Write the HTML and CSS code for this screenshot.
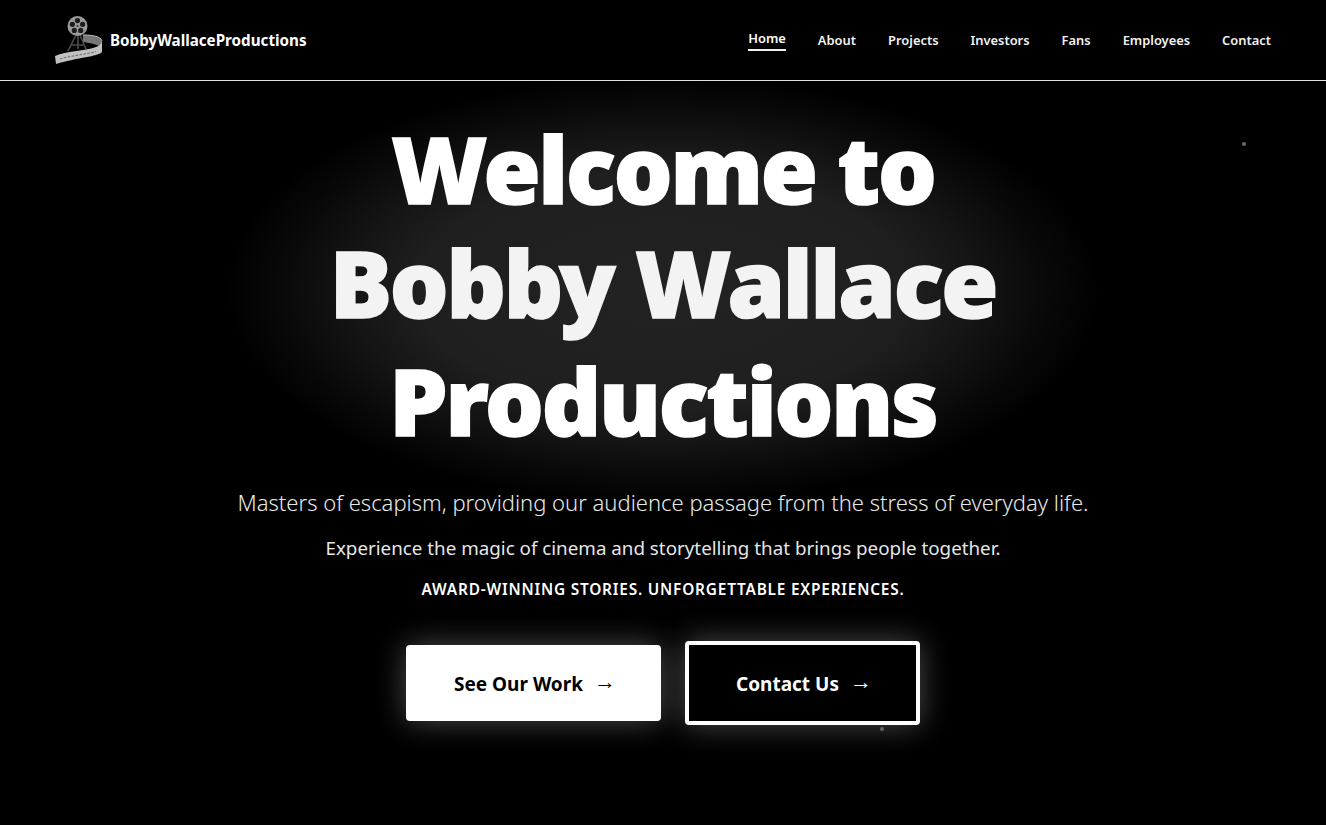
FILE: index.html
```html
<!DOCTYPE html>
<html lang="en">
<head>
    <meta charset="UTF-8">
    <title>Bobby Wallace Productions</title>
    <link rel="stylesheet" href="styles.css">
</head>
<body>
    <header class="site-header">
        <a href="#" class="brand">
            <svg class="brand-logo" viewBox="0 0 50 50" width="50" height="50" aria-hidden="true">
                <!-- film strip, back fold -->
                <path d="M28 20 C36 20 46 21 47 26 L47 33 C44 30 36 28 28 27 Z" fill="#777"/>
                <path d="M28 20 C36 20 46 21 47 26" stroke="#bbb" stroke-width="1" fill="none"/>
                <!-- tripod -->
                <path d="M21 20 L13 36 M23 20 L23 34 M25 20 L31 34 M16 30 L29 30" stroke="#4a4a4a" stroke-width="1.6" fill="none"/>
                <!-- reel -->
                <circle cx="22.5" cy="11" r="10" fill="#9a9a9a"/>
                <circle cx="22.5" cy="5.6" r="2.6" fill="#1c1c1c"/>
                <circle cx="27.6" cy="9.3" r="2.6" fill="#1c1c1c"/>
                <circle cx="25.7" cy="15.4" r="2.6" fill="#1c1c1c"/>
                <circle cx="19.3" cy="15.4" r="2.6" fill="#1c1c1c"/>
                <circle cx="17.4" cy="9.3" r="2.6" fill="#1c1c1c"/>
                <circle cx="22.5" cy="11" r="1.1" fill="#333"/>
                <!-- film strip, front banner -->
                <path d="M0 41 C12 36 28 36 38 33 C42 32 46 30 47 26 L47 37 C42 42 24 42 1 49 Z" fill="#c0c0c0"/>
                <path d="M5 44 C14 41 28 40 41 36.5" stroke="#666" stroke-width="1" stroke-dasharray="2.5 1.5" fill="none"/>
            </svg>
            <span class="brand-name">BobbyWallaceProductions</span>
        </a>
        <nav class="main-nav">
            <a href="#" class="nav-link active">Home</a>
            <a href="#" class="nav-link">About</a>
            <a href="#" class="nav-link">Projects</a>
            <a href="#" class="nav-link">Investors</a>
            <a href="#" class="nav-link">Fans</a>
            <a href="#" class="nav-link">Employees</a>
            <a href="#" class="nav-link">Contact</a>
        </nav>
    </header>

    <main class="hero">
        <span class="dot dot-top"></span>
        <span class="dot dot-bottom"></span>
        <h1 class="hero-title">
            <span class="title-line">Welcome to</span>
            <span class="title-line title-mid">Bobby Wallace</span>
            <span class="title-line title-last">Productions</span>
        </h1>
        <p class="lead">Masters of escapism, providing our audience passage from the stress of everyday life.</p>
        <p class="sublead">Experience the magic of cinema and storytelling that brings people together.</p>
        <p class="tagline">Award-winning stories. Unforgettable experiences.</p>
        <div class="actions">
            <a href="#" class="btn btn-solid">See Our Work <span class="arrow">→</span></a>
            <a href="#" class="btn btn-outline">Contact Us <span class="arrow">→</span></a>
        </div>
    </main>
</body>
</html>
```

FILE: styles.css
```css
* {
    margin: 0;
    padding: 0;
    box-sizing: border-box;
}

body {
    font-family: "Noto Sans", "Open Sans", sans-serif;
    background: #000;
    color: #fff;
    min-height: 100vh;
    overflow: hidden;
}

a {
    color: inherit;
    text-decoration: none;
}

.site-header {
    height: 81px;
    display: flex;
    align-items: center;
    justify-content: space-between;
    padding: 0 55px;
    border-bottom: 1px solid #e0e0e0;
}

.brand {
    display: flex;
    align-items: center;
    gap: 5px;
}

.brand-logo {
    display: block;
}

.brand-name {
    font-size: 15.2px;
    font-weight: 700;
}

.main-nav {
    display: flex;
    gap: 32px;
}

.nav-link {
    font-size: 12.9px;
    font-weight: 600;
    color: #f2f2f2;
    line-height: 20px;
}

.nav-link.active {
    color: #fff;
    border-bottom: 2px solid #f0f0f0;
    padding-bottom: 1px;
    margin-top: -2px;
}

.hero {
    position: relative;
    height: 744px;
    display: flex;
    flex-direction: column;
    align-items: center;
    padding-top: 30px;
    text-align: center;
    background: radial-gradient(ellipse 440px 215px at 663px 209px, #222 0%, #1f1f1f 55%, #141414 72%, #080808 88%, #000 100%);
}

.hero-title {
    font-size: 92.5px;
    font-weight: 900;
    letter-spacing: -2.2px;
    color: #fff;
    -webkit-text-stroke: 1.6px #fff;
}

.title-line {
    display: block;
    line-height: 114px;
}

.title-mid {
    color: #f3f3f3;
    -webkit-text-stroke-color: #f3f3f3;
}

.title-last {
    margin-top: 4px;
}

.lead {
    margin-top: 29px;
    font-size: 22px;
    font-weight: 300;
    line-height: 32px;
    color: #e8e8e8;
}

.sublead {
    margin-top: 16px;
    font-size: 18.8px;
    line-height: 28px;
    color: #e6e6e6;
}

.tagline {
    margin-top: 16px;
    font-size: 15.4px;
    font-weight: 600;
    line-height: 24px;
    letter-spacing: 0.8px;
    text-transform: uppercase;
}

.actions {
    margin-top: 39px;
    display: flex;
    align-items: center;
    gap: 24px;
}

.btn {
    display: flex;
    align-items: center;
    justify-content: center;
    gap: 11px;
    padding: 2px 0 0 3px;
    font-size: 19px;
    font-weight: 700;
    border-radius: 4px;
    box-shadow: 0 0 30px rgba(255, 255, 255, 0.3);
}

.btn-solid {
    width: 255px;
    height: 76px;
    background: #fff;
    color: #000;
}

.btn-outline {
    width: 235px;
    height: 84px;
    background: #000;
    border: 4px solid #fff;
}

.arrow {
    font-family: "Liberation Sans", sans-serif;
    font-weight: 400;
    font-size: 22px;
    margin-bottom: 4px;
}

.dot {
    position: absolute;
    width: 4px;
    height: 4px;
    border-radius: 50%;
    background: #666;
}

.dot-top {
    left: 1242px;
    top: 61px;
}

.dot-bottom {
    left: 880px;
    top: 646px;
}
```
